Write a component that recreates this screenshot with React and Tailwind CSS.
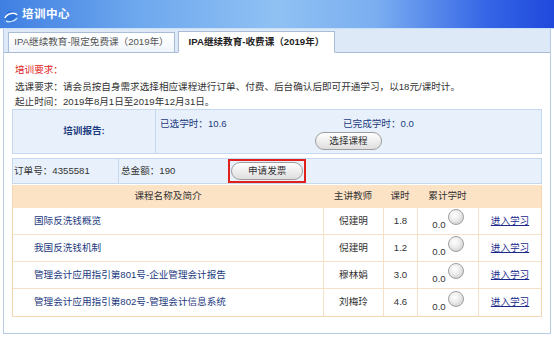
export default function App() {
  const rows = [
    ["国际反洗钱概览", "倪建明", "1.8"],
    ["我国反洗钱机制", "倪建明", "1.2"],
    ["管理会计应用指引第801号-企业管理会计报告", "穆林娟", "3.0"],
    ["管理会计应用指引第802号-管理会计信息系统", "刘梅玲", "4.6"],
  ];
  const btn =
    "h-[18px] px-[13px] rounded-full border border-[#9d9d9d] bg-[linear-gradient(#ffffff,#dedede)] text-[9.6px] leading-[16px] text-[#333]";
  return (
    <div className="w-[554px] h-[337px] bg-white overflow-hidden font-['Liberation_Sans','Noto_Sans_CJK_SC',sans-serif] text-[9.6px] text-[#333]">
      {/* header */}
      <div className="h-[29px] flex items-center pl-[3px] bg-[linear-gradient(90deg,#3f7fe2_0%,#6ea8ee_25%,#8fc1f3_50%,#7aaef0_68%,#3565e6_88%,#1f49dc_100%)] border-b border-[#c9def7]">
        <svg width="16" height="16" viewBox="0 0 16 16" className="mt-[6px]">
          <circle cx="8" cy="8" r="6" fill="#2c6fd6" />
          <path d="M2 9 C 4 4, 12 3, 14 6" stroke="#ffffff" strokeWidth="1.6" fill="none" />
          <path d="M3 12 C 7 14, 12 12, 14 9" stroke="#bfe0ff" strokeWidth="1.4" fill="none" />
        </svg>
        <span className="ml-[3px] mt-[2px] text-white font-bold text-[11.5px] tracking-[0.5px]">培训中心</span>
      </div>
      {/* panel */}
      <div className="mx-[3px] h-[305px] border-x border-b border-[#b7cbe6]">
        {/* tabs */}
        <div className="h-[24px] bg-[#dee9f8] border-b border-[#a9bdd8] flex items-end pl-[4px] gap-[3px]">
          <div className="w-[167px] h-[21px] -mb-px border border-[#a9bdd8] bg-[linear-gradient(#ffffff,#f0f5fc)] flex items-center justify-center text-[#555]">
            IPA继续教育-限定免费课（2019年）
          </div>
          <div className="w-[157px] h-[22px] -mb-px border border-[#a9bdd8] border-b-white bg-white flex items-center justify-center text-[#222] font-bold">
            IPA继续教育-收费课（2019年）
          </div>
        </div>
        <div className="px-[8px]">
          <div className="pt-[9px] pl-[3px] leading-[15px]">
            <div className="text-[#e02020] mb-[2px]">培训要求：</div>
            <div>选课要求：请会员按自身需求选择相应课程进行订单、付费、后台确认后即可开通学习，以18元/课时计。</div>
            <div>起止时间：2019年8月1日至2019年12月31日。</div>
          </div>
          {/* report box */}
          <div className="h-[45px] flex border border-[#c6d8ee] bg-[#e8f1fb]">
            <div className="w-[143px] border-r border-[#c6d8ee] flex items-center justify-center font-bold text-[#1c3a7e]">
              培训报告:
            </div>
            <div className="flex-1 pt-[6px]">
              <div className="flex leading-[15px] text-[#1c3a7e]">
                <div className="w-[187px] pl-[4px]">已选学时：10.6</div>
                <div>已完成学时：0.0</div>
              </div>
              <div className="flex justify-center mt-[1px]">
                <button className={btn}>选择课程</button>
              </div>
            </div>
          </div>
          {/* order row */}
          <div className="mt-[4px] h-[26px] flex items-center border border-[#c6d8ee] bg-[#e8f1fb] text-[#333]">
            <div className="w-[106px] h-full flex items-center pl-[1px] border-r border-[#c6d8ee]">订单号：4355581</div>
            <div className="w-[109px] pl-[2px]">总金额：190</div>
            <div className="border-2 border-[#e0201c] p-[1px]">
              <button className={btn + " px-[16px]"}>申请发票</button>
            </div>
          </div>
          {/* table */}
          <div className="mt-[1px] border border-[#f3d6b4] border-t-0">
            <div className="grid grid-cols-[310px_60px_34px_61px_1fr] h-[23px] bg-[#fde3c6] text-[#333]">
              <div className="flex items-center justify-center">课程名称及简介</div>
              <div className="flex items-center justify-center">主讲教师</div>
              <div className="flex items-center justify-center">课时</div>
              <div className="flex items-center justify-center">累计学时</div>
              <div></div>
            </div>
            {rows.map((r, i) => (
              <div
                key={i}
                className={"grid grid-cols-[310px_60px_34px_61px_1fr] h-[27px] " + (i < rows.length - 1 ? "border-b border-[#f6e0c8]" : "")}
              >
                <div className="flex items-center pl-[21px] text-[#1c3a7e]">{r[0]}</div>
                <div className="flex items-center justify-center border-l border-[#f6e0c8]">{r[1]}</div>
                <div className="flex items-center justify-center border-l border-[#f6e0c8]">{r[2]}</div>
                <div className="flex items-end justify-center border-l border-[#f6e0c8] pb-[4px]">
                  <span className="leading-[10px]">0.0</span>
                  <span className="ml-[2px] mb-[5px] w-[16px] h-[16px] rounded-full border border-[#a0a0a0] bg-[radial-gradient(circle_at_40%_35%,#ffffff_0%,#ebebeb_45%,#c2c2c2_100%)]"></span>
                </div>
                <div className="flex items-center justify-center border-l border-[#f6e0c8]">
                  <a className="underline text-[#1a2a8c]">进入学习</a>
                </div>
              </div>
            ))}
          </div>
        </div>
      </div>
    </div>
  );
}
